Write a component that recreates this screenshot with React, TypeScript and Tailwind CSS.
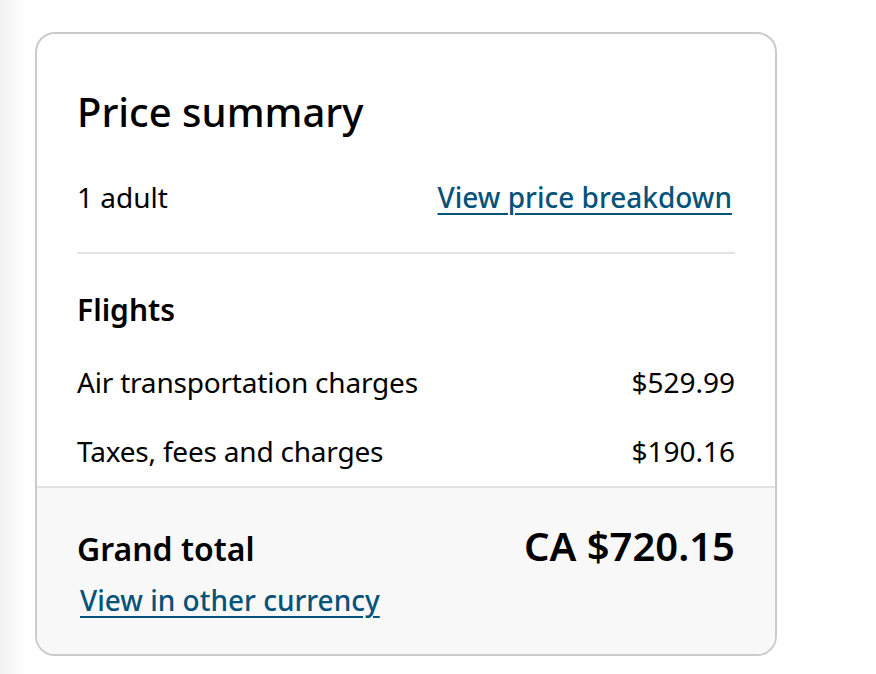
import React from 'react';

const rows = [
  { label: 'Air transportation charges', amount: '$529.99' },
  { label: 'Taxes, fees and charges', amount: '$190.16' },
];

export default function App() {
  return (
    <div
      className="relative h-[674px] w-[876px] overflow-hidden bg-white text-black"
      style={{ fontFamily: '"Noto Sans", "Open Sans", sans-serif' }}
    >
      {/* faint shade along the left edge */}
      <div className="absolute inset-y-0 left-0 w-[26px] bg-gradient-to-r from-[#f2f2f2] to-white" />

      <div className="relative ml-[35px] mt-[32px] flex h-[624px] w-[742px] flex-col overflow-hidden rounded-[20px] border-2 border-[#cbcbcb] bg-white">
        <div className="flex-1 px-[40px] pt-[54px]">
          <h2 className="text-[40px] font-medium leading-[48px]">Price summary</h2>

          <div className="mt-[43px] flex items-baseline justify-between text-[28px] leading-[36px]">
            <span>1 adult</span>
            <a href="#" className="mr-[3px] font-medium text-[#05527a] underline decoration-2 underline-offset-[5px]">
              View price breakdown
            </a>
          </div>

          <div className="mt-[37px] h-[2px] bg-[#e2e2e2]" />

          <h3 className="mt-[36px] text-[30px] font-semibold leading-[40px]">Flights</h3>

          <div className="mt-[34px] flex flex-col gap-[33px]">
            {rows.map((row) => (
              <div key={row.label} className="flex justify-between text-[28px] leading-[36px]">
                <span className="tracking-[-0.2px]">{row.label}</span>
                <span>{row.amount}</span>
              </div>
            ))}
          </div>
        </div>

        <div className="h-[168px] border-t-2 border-[#e2e2e2] bg-[#f8f8f8] px-[40px] pt-[34px]">
          <div className="flex items-baseline justify-between">
            <span className="text-[32px] font-semibold leading-[40px]">Grand total</span>
            <span className="text-[40px] font-semibold leading-[48px]">CA $720.15</span>
          </div>
          <a
            href="#"
            className="ml-[3px] mt-[12px] inline-block text-[28px] font-medium leading-[36px] text-[#05527a] underline decoration-2 underline-offset-[5px]"
          >
            View in other currency
          </a>
        </div>
      </div>
    </div>
  );
}
